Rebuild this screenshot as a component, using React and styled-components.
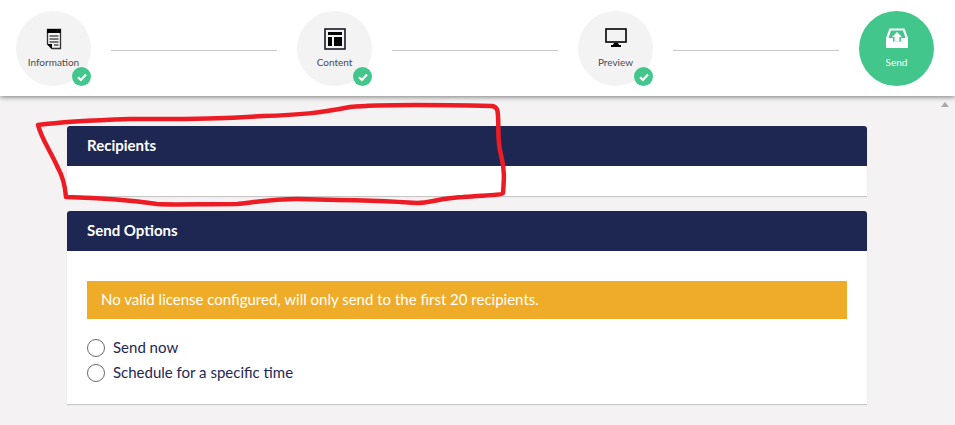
import React from "react";
import styled, { createGlobalStyle } from "styled-components";

const steps = [
  { label: "Information", icon: <DocIcon />, done: true },
  { label: "Content", icon: <LayoutIcon />, done: true },
  { label: "Preview", icon: <MonitorIcon />, done: true },
  { label: "Send", icon: <InboxIcon />, active: true },
];

export default function App() {
  return (
    <Page>
      <GlobalStyle />
      <Header>
        {steps.map((step, i) => (
          <React.Fragment key={step.label}>
            {i > 0 && <Line />}
            <Step $active={step.active}>
              {step.icon}
              <StepLabel $active={step.active}>{step.label}</StepLabel>
              {step.done && (
                <Check>
                  <svg width="12" height="12" viewBox="0 0 12 12">
                    <path d="M2 6.2 L4.9 9 L10 3.4" fill="none" stroke="#fff" strokeWidth="2.2" />
                  </svg>
                </Check>
              )}
            </Step>
          </React.Fragment>
        ))}
      </Header>
      <Main>
        <ScrollArrow />
        <Card>
          <CardTitle>Recipients</CardTitle>
          <EmptyBody />
        </Card>
        <Card>
          <CardTitle>Send Options</CardTitle>
          <CardBody>
            <Alert>No valid license configured, will only send to the first 20 recipients.</Alert>
            <RadioRow>
              <Radio />
              Send now
            </RadioRow>
            <RadioRow>
              <Radio />
              Schedule for a specific time
            </RadioRow>
          </CardBody>
        </Card>
      </Main>
      <Scribble width="955" height="425" viewBox="0 0 955 425">
        <path
          d="M38 125 C60 122 100 120 130 119 C170 119 200 120 263 116 C300 115 320 113 350 107 C380 104 450 105 492 106 C497 107 498 110 498 116 C499 130 497 140 501 155 C505 170 504 180 503 193 C502 195 490 195 463 197 C440 198 430 203 417 203 C390 201 350 200 297 199 C270 199 250 203 237 204 C200 204 170 205 157 204 C130 200 100 198 66 197 C65 185 62 175 58 168 C50 150 42 140 38 125 Z"
          fill="none"
          stroke="#ed1c24"
          strokeWidth="4.5"
          strokeLinejoin="round"
        />
      </Scribble>
    </Page>
  );
}

function DocIcon() {
  return (
    <svg width="16" height="22" viewBox="0 0 16 22">
      <path d="M1.5 1.5 H14.5 V20.5 H6 L1.5 16 Z" fill="none" stroke="#333" strokeWidth="1.3" />
      <path d="M1 1 H15 V5 H1 Z" fill="#000" />
      <path d="M1 16 H6 V21 Z" fill="#000" />
      <path d="M3.5 8 H12.5 M3.5 11 H12.5 M3.5 14 H12.5 M8 17 H12.5" stroke="#000" strokeWidth="1.2" />
    </svg>
  );
}

function LayoutIcon() {
  return (
    <svg width="22" height="22" viewBox="0 0 22 22">
      <rect x="1" y="1" width="20" height="20" fill="none" stroke="#1a1a2a" strokeWidth="1.6" />
      <path d="M4 4 H18 V7 H4 Z M4 9 H8 V18 H4 Z M10 9 H18 V18 H10 Z" fill="#000" />
    </svg>
  );
}

function MonitorIcon() {
  return (
    <svg width="22" height="20" viewBox="0 0 22 20">
      <rect x="1" y="1" width="20" height="13" fill="none" stroke="#000" strokeWidth="1.6" />
      <path d="M9 15 H13 L14 17 H16 V19 H6 V17 H8 Z" fill="#000" />
    </svg>
  );
}

function InboxIcon() {
  return (
    <svg width="24" height="20" viewBox="0 0 24 20">
      <path d="M1 10 L4.5 0.5 H19.5 L23 10 V20 H1 Z" fill="#fff" />
      <path d="M6 2.5 H18 L20.5 10 H16 V13.5 H8 V10 H3.5 Z" fill="#42c68b" />
      <path d="M12 4 L17 9 H14.4 V13.5 H9.6 V9 H7 Z" fill="#fff" />
    </svg>
  );
}

const GlobalStyle = createGlobalStyle`
  html, body {
    margin: 0;
    padding: 0;
  }
  body {
    font-family: Lato, "Liberation Sans", sans-serif;
    background: #f4f2f3;
  }
`;

const Page = styled.div`
  position: relative;
  width: 955px;
  height: 425px;
  overflow: hidden;
  background: #f4f2f3;
`;

const Header = styled.header`
  height: 96px;
  box-sizing: border-box;
  padding: 11px 21px 0 16px;
  display: flex;
  align-items: flex-start;
  gap: 20px;
  background: #fff;
  box-shadow: 0 1px 5px rgba(0, 0, 0, 0.5);
  position: relative;
`;

const Step = styled.div`
  position: relative;
  width: 75px;
  height: 75px;
  flex: none;
  border-radius: 50%;
  background: ${(p) => (p.$active ? "#42c68b" : "#f3f3f3")};
  display: flex;
  flex-direction: column;
  align-items: center;
  padding-top: 17px;
  box-sizing: border-box;
`;

const StepLabel = styled.span`
  position: absolute;
  top: 45px;
  left: 0;
  right: 0;
  text-align: center;
  font-size: 10px;
  line-height: 12px;
  color: ${(p) => (p.$active ? "#fff" : "#4a4a55")};
`;

const Check = styled.span`
  position: absolute;
  right: 0;
  bottom: 0;
  width: 19px;
  height: 19px;
  border-radius: 50%;
  background: #42c68b;
  display: flex;
  align-items: center;
  justify-content: center;
`;

const Line = styled.div`
  flex: 1;
  height: 1px;
  margin-top: 39px;
  background: #c8c8c8;
`;

const Main = styled.main`
  position: relative;
  padding: 30px 88px 0 67px;
  display: flex;
  flex-direction: column;
  gap: 15px;
`;

const ScrollArrow = styled.span`
  position: absolute;
  top: 6px;
  right: 6px;
  width: 0;
  height: 0;
  border-left: 4px solid transparent;
  border-right: 4px solid transparent;
  border-bottom: 5px solid #a8a8a8;
`;

const Card = styled.section`
  background: #fff;
  box-shadow: 0 1px 1px rgba(0, 0, 0, 0.2);
  border-radius: 3px 3px 0 0;
`;

const CardTitle = styled.h2`
  margin: 0;
  height: 40px;
  padding: 0 20px 2px;
  box-sizing: border-box;
  display: flex;
  align-items: center;
  background: #1e2752;
  border-radius: 3px 3px 0 0;
  color: #fff;
  font-size: 15px;
  font-weight: 700;
`;

const EmptyBody = styled.div`
  height: 30px;
`;

const CardBody = styled.div`
  padding: 30px 20px 19px;
`;

const Alert = styled.div`
  height: 38px;
  box-sizing: border-box;
  padding: 0 14px 2px;
  display: flex;
  align-items: center;
  margin-bottom: 16px;
  background: #efac28;
  color: #fff;
  font-size: 15px;
`;

const RadioRow = styled.label`
  height: 25px;
  display: flex;
  align-items: center;
  gap: 8px;
  color: #1e2752;
  font-size: 15px;
  line-height: 23px;
  padding-bottom: 1px;
  box-sizing: border-box;
`;

const Radio = styled.span`
  width: 18px;
  height: 18px;
  box-sizing: border-box;
  margin-top: 1px;
  border: 1px solid #6b6b6b;
  border-radius: 50%;
  background: #fff;
  flex: none;
`;

const Scribble = styled.svg`
  position: absolute;
  top: 0;
  left: 0;
  pointer-events: none;
`;
